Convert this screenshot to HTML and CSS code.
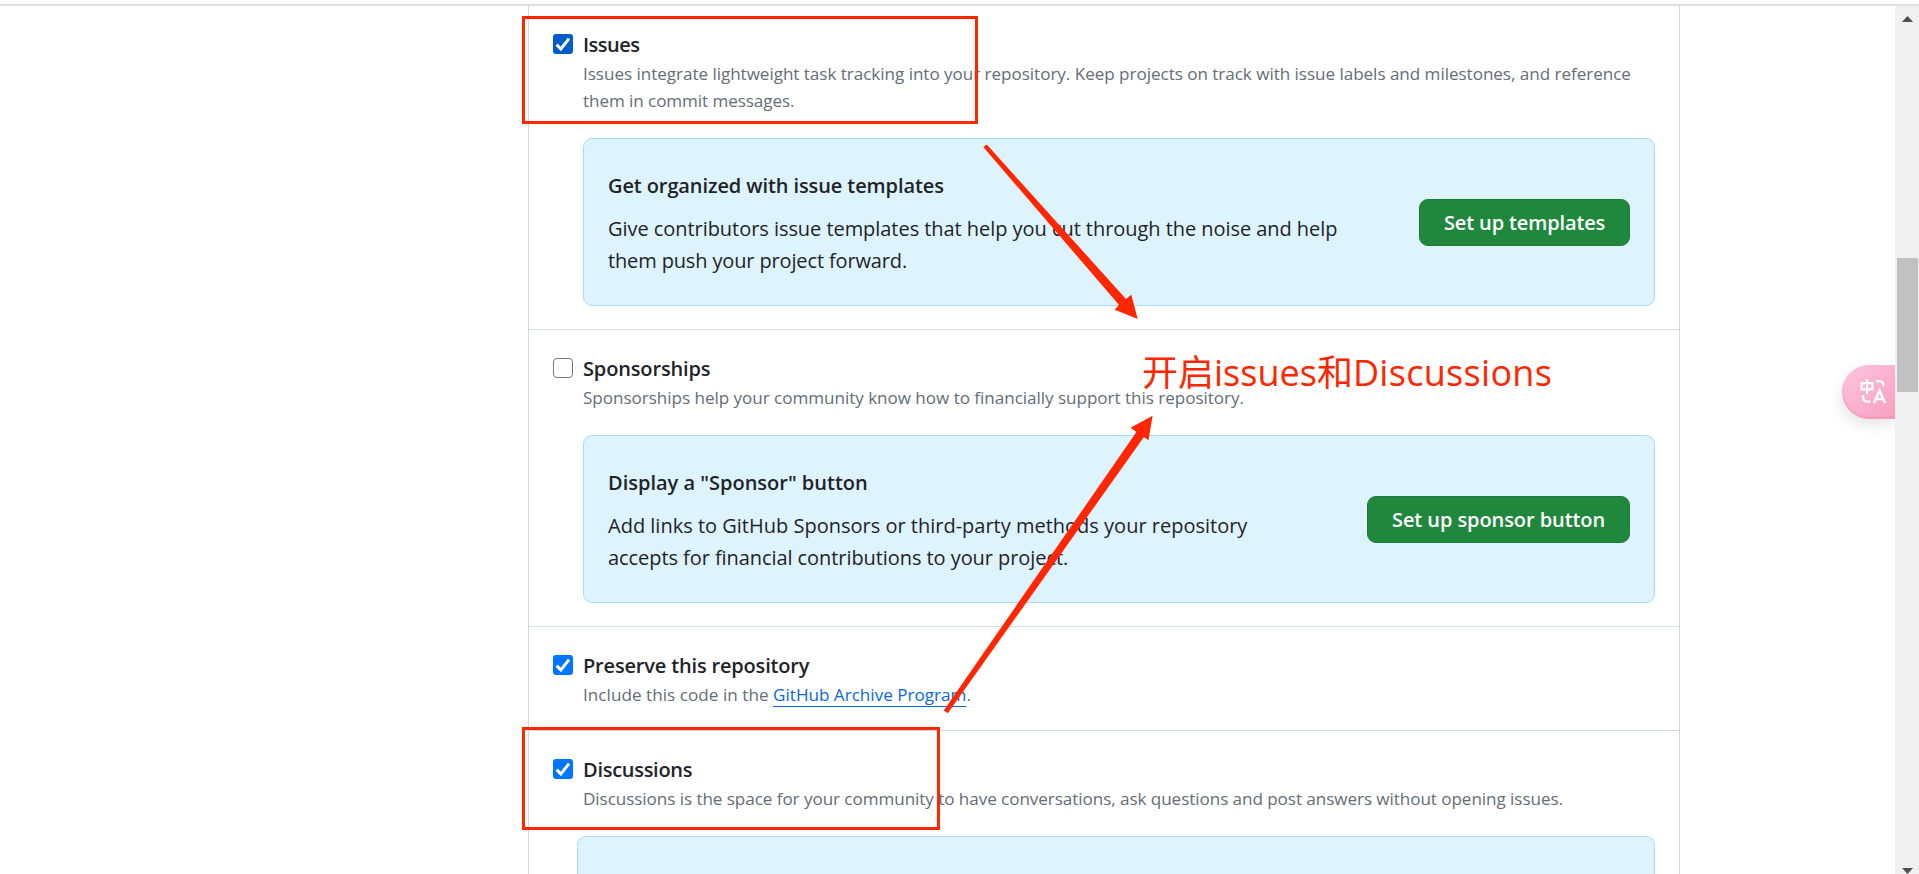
FILE: index.html
```html
<!DOCTYPE html>
<html lang="en">
<head>
<meta charset="utf-8">
<title>Repository features</title>
<link rel="stylesheet" href="styles.css">
</head>
<body>
<div class="topline"></div>
<div class="viewport">
  <main class="page">
    <section class="features">
      <div class="row first">
        <span class="check focus"><svg viewBox="0 0 20 20"><path d="M3.6 10.6 7.9 15 16 4.6"/></svg></span>
        <div class="body">
          <h3 class="t-issues">Issues</h3>
          <p class="note n1">Issues integrate lightweight task tracking into your repository. Keep projects on track with issue labels and milestones, and reference<br><span class="n1b">them in commit messages.</span></p>
          <div class="flash">
            <div>
              <h4 class="t-get">Get organized with issue templates</h4>
              <p class="b1">Give contributors issue templates that help you cut through the noise and help<br><span class="b1b">them push your project forward.</span></p>
            </div>
            <a class="btn btn-templates">Set up templates</a>
          </div>
        </div>
      </div>
      <div class="row">
        <span class="check empty"></span>
        <div class="body">
          <h3 class="t-sponsor">Sponsorships</h3>
          <p class="note n2">Sponsorships help your community know how to financially support this repository.</p>
          <div class="flash">
            <div>
              <h4>Display a "Sponsor" button</h4>
              <p>Add links to GitHub Sponsors or third-party methods your repository<br><span class="b2b">accepts for financial contributions to your project.</span></p>
            </div>
            <a class="btn btn-sponsor">Set up sponsor button</a>
          </div>
        </div>
      </div>
      <div class="row">
        <span class="check"><svg viewBox="0 0 20 20"><path d="M3.6 10.6 7.9 15 16 4.6"/></svg></span>
        <div class="body">
          <h3 class="t-preserve">Preserve this repository</h3>
          <p class="note"><span class="n3">Include this code in the </span><a class="link">GitHub Archive Program</a>.</p>
        </div>
      </div>
      <div class="row strong">
        <span class="check"><svg viewBox="0 0 20 20"><path d="M3.6 10.6 7.9 15 16 4.6"/></svg></span>
        <div class="body">
          <h3 class="t-disc">Discussions</h3>
          <p class="note n4">Discussions is the space for your community to have conversations, ask questions and post answers without opening issues.</p>
          <div class="flash wide"></div>
        </div>
      </div>
    </section>
  </main>
  <aside class="scrollbar">
    <svg class="up" viewBox="0 0 11 6"><path d="M0 6 5.5 0 11 6z"/></svg>
    <div class="thumb"></div>
    <svg class="down" viewBox="0 0 11 6"><path d="M0 0H11L5.5 6z"/></svg>
  </aside>
</div>

<div class="translate">
  <svg viewBox="0 0 26 26" fill="none" stroke="#fff" stroke-width="2.2">
    <path d="M1.6 5.2H12.4V11.4H1.6zM7 1V16"/>
    <path d="M16 3.2H19.5Q23.4 3.2 23.4 8.2"/>
    <path d="M3 17V18Q3 23.6 7.5 23.6H10.5"/>
    <path d="M14 25 19.5 12.5 25 25M15.8 21H23.2" stroke-width="2.5"/>
  </svg>
</div>

<div class="mark mark-issues"></div>
<div class="mark mark-discussions"></div>
<svg class="arrows" viewBox="0 0 1919 874">
  <path d="M983.3 147 986.8 144.6 1126 299 1131.3 294.7 1137.7 319 1114.7 309.7 1118.9 304.8z"/>
  <path d="M943.7 710.6 947.8 713.2 1143.9 437 1148.5 440.3 1152.6 415.7 1130.6 427.7 1136.4 432z"/>
</svg>
<div class="caption">开启<span class="cap-a">issues</span>和<span class="cap-b">Discussions</span></div>
</body>
</html>
```
FILE: styles.css
```css
* { box-sizing: border-box; margin: 0; padding: 0; }
body {
  width: 1919px; height: 874px; overflow: hidden; background: #fff;
  font-family: "Open Sans", "Noto Sans", sans-serif; color: #1f2328;
  white-space: nowrap;
}
.topline { height: 6px; border-bottom: 2px solid #e0e0e0; }
.viewport { display: flex; height: 868px; overflow: hidden; }
.page { flex: 1; padding-left: 528px; }
.features { width: 1152px; height: 900px; border: solid #d0d7de; border-width: 0 1px; }
.row { display: flex; padding: 24px 24px 23px; border-top: 1px solid #d8dee4; }
.row.first { border-top: 0; }
.row.strong { border-top-color: #d0d7de; }
.row:nth-child(3) { padding-bottom: 22px; }
.body { flex: 1; }

.check {
  width: 20px; height: 20px; margin: 4px 10px 0 0; border-radius: 3px;
  background: #0075ff; flex: none;
}
.check.focus { background: #005cc8; }
.check.empty { background: #fff; border: 1.5px solid #767676; border-radius: 4px; }
.check svg { display: block; width: 20px; height: 20px; fill: none; stroke: #fff; stroke-width: 3; }

h3 { height: 30px; font-size: 20px; line-height: 30px; font-weight: 580; }
h4 { font-size: 20px; line-height: 32px; font-weight: 580; margin-bottom: 11px; }
.t-issues { letter-spacing: -.5px; }
.t-get { letter-spacing: -.1px; }
.t-sponsor { letter-spacing: -.15px; }
.t-preserve { letter-spacing: -.17px; }
.t-disc { letter-spacing: -.28px; }

.note { font-size: 17.1px; line-height: 27px; color: #656d76; }
.n1, .n2 { letter-spacing: -.043px; }
.n1b { letter-spacing: -.08px; }
.n3 { letter-spacing: .04px; }
.n4 { letter-spacing: -.065px; }
.link { color: #0969da; border-bottom: 1px solid #0969da; }

.flash {
  display: flex; justify-content: space-between; align-items: center;
  height: 168px; margin-top: 24px; padding: 2px 24px 0;
  background: #ddf4ff; border: 1px solid #a9dafb; border-radius: 9px;
}
.flash.wide { margin-left: -6px; }
.flash p { font-size: 20px; line-height: 32px; }
.b1 { letter-spacing: -.05px; }
.b1b { letter-spacing: -.14px; }
.b2b { letter-spacing: -.07px; }
.btn {
  height: 47px; margin-bottom: 1px; padding: 0 24px; border: 1px solid #1f7a3a; border-radius: 9px;
  background: #1f883d; color: #fff; font-size: 20px; font-weight: 600;
  line-height: 46px; text-align: center;
}
.btn-templates { width: 211px; letter-spacing: -.13px; }
.btn-sponsor { width: 263px; letter-spacing: -.08px; }

.scrollbar {
  width: 24px; background: #f0f0f0; display: flex; flex-direction: column;
  padding-top: 10px;
}
.scrollbar svg { display: block; width: 11px; height: 6px; margin-left: 7px; fill: #505050; flex: none; }
.thumb { width: 21px; height: 134px; margin: 236px 0 476px 2px; background: #c1c1c1; flex: none; }

.translate {
  position: absolute; left: 1842px; top: 365px; width: 53px; height: 54px;
  border-radius: 27px 0 0 27px; padding: 13px 0 0 18px;
  background: linear-gradient(135deg, #ffc4dd, #f6a0c2);
  box-shadow: inset 1px -2px 2px rgba(225, 130, 170, .3), -2px 6px 14px rgba(0, 0, 0, .1);
  clip-path: inset(-20px 0 -30px -30px);
}
.translate svg { display: block; width: 26px; height: 26px; }

.mark { position: absolute; border: 3px solid #ff2600; }
.mark-issues { left: 522px; top: 16px; width: 456px; height: 108px; }
.mark-discussions { left: 522px; top: 726.5px; width: 417.5px; height: 103px; }
.arrows { position: absolute; left: 0; top: 0; width: 1919px; height: 874px; fill: #ff2600; }
.caption {
  position: absolute; left: 1142px; top: 346px;
  font: 36px/54px "Open Sans", "Noto Sans CJK SC", sans-serif; color: #ff2600;
}
.cap-a { letter-spacing: 0; }
.cap-b { letter-spacing: .3px; }
```
